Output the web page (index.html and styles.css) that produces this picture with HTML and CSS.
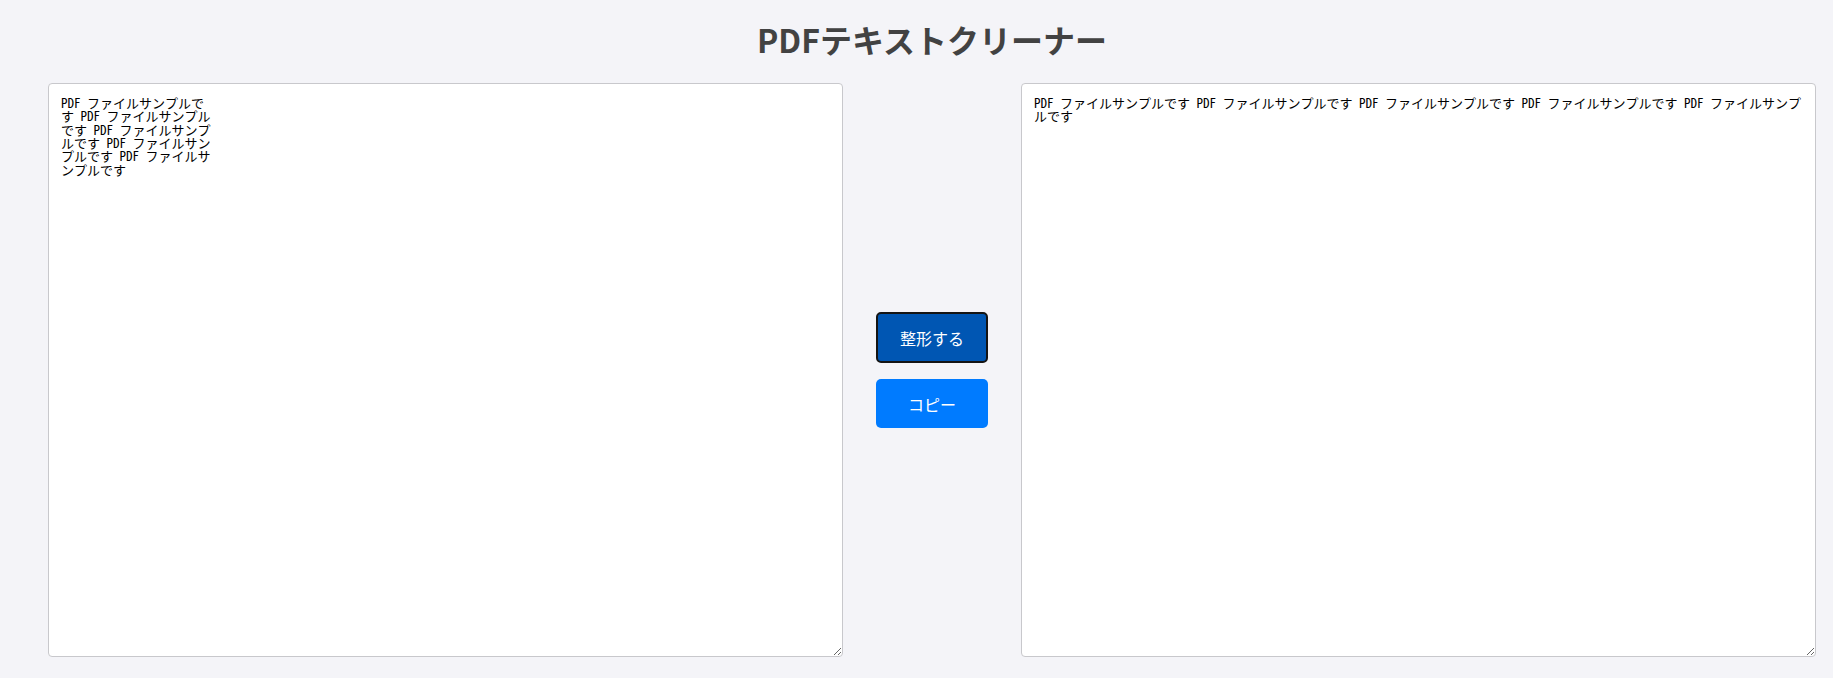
FILE: index.html
```html
<!DOCTYPE html>
<html lang="ja">
<head>
<meta charset="utf-8">
<title>PDFテキストクリーナー</title>
<link rel="stylesheet" href="styles.css">
</head>
<body>
<div class="page">
  <h1 class="title">PDFテキストクリーナー</h1>
  <div class="workspace">
    <textarea class="text-box" spellcheck="false">PDF ファイルサンプルで
す PDF ファイルサンプル
です PDF ファイルサンプ
ルです PDF ファイルサン
プルです PDF ファイルサ
ンプルです</textarea>
    <div class="actions">
      <button class="btn btn-format">整形する</button>
      <button class="btn btn-copy">コピー</button>
    </div>
    <textarea class="text-box" spellcheck="false">PDF ファイルサンプルです PDF ファイルサンプルです PDF ファイルサンプルです PDF ファイルサンプルです PDF ファイルサンプルです</textarea>
  </div>
</div>
</body>
</html>
```

FILE: styles.css
```css
html, body {
  margin: 0;
  padding: 0;
  background: #f4f4f8;
}

.page {
  height: 678px;
  box-sizing: border-box;
  padding: 16px 17px 21px 48px;
  display: flex;
  flex-direction: column;
}

.title {
  margin: 0 0 21px;
  text-align: center;
  font-family: "Noto Sans CJK JP", "Noto Sans", sans-serif;
  font-weight: 700;
  font-size: 32px;
  line-height: 46px;
  color: #424242;
}

.workspace {
  flex: 1;
  display: flex;
  align-items: center;
  gap: 33px;
  min-height: 0;
}

.text-box {
  flex: 1;
  align-self: stretch;
  min-width: 0;
  box-sizing: border-box;
  margin: 0;
  padding: 12px;
  border: 1px solid #c8c8cc;
  border-radius: 4px;
  background: #fff;
  color: #000;
  font-family: "Noto Sans Mono CJK JP", "Noto Sans CJK JP", monospace;
  font-size: 13px;
  line-height: 13.33px;
  outline: none;
}

.actions {
  width: 112px;
  display: flex;
  flex-direction: column;
  gap: 16px;
}

.btn {
  width: 112px;
  height: 49px;
  box-sizing: border-box;
  border: 0;
  border-radius: 5px;
  color: #fff;
  font-family: "Noto Sans CJK JP", "Noto Sans", sans-serif;
  font-size: 16px;
  cursor: pointer;
  padding: 0;
}

.btn-format {
  height: 51px;
  background: #0056b3;
  border: 2px solid #141414;
}

.btn-copy {
  background: #007bff;
}
```
